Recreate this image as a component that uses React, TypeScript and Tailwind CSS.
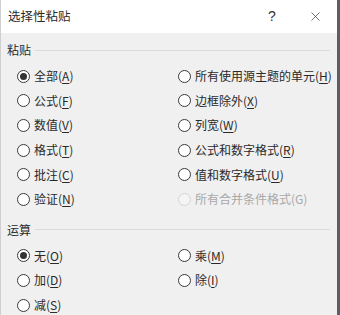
import { X } from 'lucide-react';

type Opt = { label: string; key: string; checked?: boolean; disabled?: boolean };

const pasteLeft: Opt[] = [
  { label: '全部', key: 'A', checked: true },
  { label: '公式', key: 'F' },
  { label: '数值', key: 'V' },
  { label: '格式', key: 'T' },
  { label: '批注', key: 'C' },
  { label: '验证', key: 'N' },
];

const pasteRight: Opt[] = [
  { label: '所有使用源主题的单元', key: 'H' },
  { label: '边框除外', key: 'X' },
  { label: '列宽', key: 'W' },
  { label: '公式和数字格式', key: 'R' },
  { label: '值和数字格式', key: 'U' },
  { label: '所有合并条件格式', key: 'G', disabled: true },
];

const opLeft: Opt[] = [
  { label: '无', key: 'O', checked: true },
  { label: '加', key: 'D' },
  { label: '减', key: 'S' },
];

const opRight: Opt[] = [
  { label: '乘', key: 'M' },
  { label: '除', key: 'I' },
];

const Radio = ({ opt }: { opt: Opt }) => (
  <div className="h-[24.6px] flex items-center gap-[4px]">
    {/* circle */}
    <span
      className={
        'w-[13px] h-[13px] rounded-full border flex items-center justify-center shrink-0 ' +
        (opt.disabled ? 'border-[#d4d4d4] bg-[#f4f4f4]' : 'border-[#3a3a3a] bg-white')
      }
    >
      {opt.checked && <span className="w-[7px] h-[7px] rounded-full bg-[#333333]" />}
    </span>
    <span className={'text-[12px] leading-[16px] ' + (opt.disabled ? 'text-[#a8a8a8]' : 'text-[#2a2a2a]')}>
      {opt.label}(
      {opt.disabled ? opt.key : <span className="underline underline-offset-2">{opt.key}</span>})
    </span>
  </div>
);

const Section = ({ title }: { title: string }) => (
  <div className="flex items-center gap-[4px] pl-[6px] pr-[7px]">
    <span className="text-[12px] leading-[16px] text-[#2a2a2a]">{title}</span>
    <span className="flex-1 h-px bg-[#dadada]" />
  </div>
);

const Column = ({ opts }: { opts: Opt[] }) => (
  <div className="flex flex-col">
    {opts.map((o) => (
      <Radio key={o.key} opt={o} />
    ))}
  </div>
);

export default function App() {
  return (
    <div
      className="w-[340px] h-[315px] overflow-hidden flex flex-col bg-[#f0f0f0] border-l border-[#cfcfcf] border-r-[3px] border-r-[#5e5e5e]"
      style={{ fontFamily: '"Noto Sans CJK SC", "Noto Sans", sans-serif' }}
    >
      {/* title bar */}
      <div className="h-[33px] bg-white flex items-center pl-[7px] shrink-0">
        <span className="text-[12.5px] text-[#2a2a2a] flex-1">选择性粘贴</span>
        <span
          className="text-[14px] text-[#333] w-[20px] mr-[11px] text-center"
          style={{ fontFamily: '"Liberation Sans", sans-serif' }}
        >
          ?
        </span>
        <span className="w-[44px] flex justify-center text-[#333]">
          <X size={15} strokeWidth={1.1} />
        </span>
      </div>

      {/* paste */}
      <div className="mt-[9px]">
        <Section title="粘贴" />
      </div>
      <div className="grid grid-cols-[161px_1fr] pl-[16px] mt-[6px]">
        <Column opts={pasteLeft} />
        <Column opts={pasteRight} />
      </div>

      {/* operation */}
      <div className="mt-[10px]">
        <Section title="运算" />
      </div>
      <div className="grid grid-cols-[161px_1fr] pl-[16px] mt-[6px]">
        <Column opts={opLeft} />
        <Column opts={opRight} />
      </div>
    </div>
  );
}
